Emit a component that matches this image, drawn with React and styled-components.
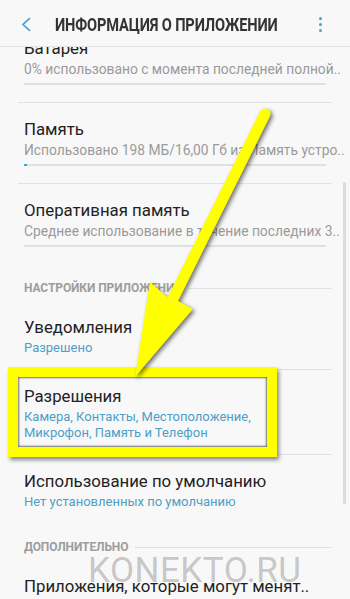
import React from 'react'
import styled, { createGlobalStyle } from 'styled-components'

const GlobalStyle = createGlobalStyle`
  html, body {
    margin: 0;
    padding: 0;
    background: #f8f8f8;
  }
  body {
    font-family: Roboto, "Noto Sans", Arial, sans-serif;
    -webkit-font-smoothing: antialiased;
  }
`

// data for the list
const storageRows = [
  { title: 'Батарея', sub: '0% использовано с момента последней полной..', fill: 0 },
  { title: 'Память', sub: 'Использовано 198 МБ/16,00 Гб из Память устро..', fill: 1 },
  { title: 'Оперативная память', sub: 'Среднее использование в течение последних 3..', fill: 0 },
]

const App = () => {
  return (
    <Screen>
      <GlobalStyle />
      {/* toolbar */}
      <Header>
        <BackButton>
          <svg width="11" height="15" viewBox="0 0 11 15">
            <path d="M9 1.2 L2 7.5 L9 13.8" fill="none" stroke="#4a9fca" strokeWidth="1.6" />
          </svg>
        </BackButton>
        <Title>ИНФОРМАЦИЯ О ПРИЛОЖЕНИИ</Title>
        <MenuButton>
          <Dot />
          <Dot />
          <Dot />
        </MenuButton>
      </Header>

      <Scroll>
        <Content>
          <Group>
            {storageRows.map((r) => (
              <Row key={r.title} $bar>
                <RowTitle>{r.title}</RowTitle>
                <RowSub>{r.sub}</RowSub>
                <Bar>
                  <BarFill $empty={r.fill === 0} style={{ width: `${r.fill}%` }} />
                </Bar>
              </Row>
            ))}
          </Group>

          <SectionHeader>
            <span>Настройки приложения</span>
          </SectionHeader>
          <Group>
            <Row>
              <RowTitle>Уведомления</RowTitle>
              <RowSub $blue>Разрешено</RowSub>
            </Row>
            <Row>
              <RowTitle>Разрешения</RowTitle>
              <RowSub $blue>
                Камера, Контакты, Местоположение,
                <br />
                Микрофон, Память и Телефон
              </RowSub>
              <Frame />
            </Row>
            <Row>
              <RowTitle>Использование по умолчанию</RowTitle>
              <RowSub $blue>Нет установленных по умолчанию</RowSub>
            </Row>
          </Group>

          <SectionHeader>
            <span>Дополнительно</span>
          </SectionHeader>
          <Group>
            <Row>
              <RowTitle>Приложения, которые могут менят..</RowTitle>
              <RowSub $blue>Разрешено</RowSub>
            </Row>
          </Group>
        </Content>
      </Scroll>

      <ScrollThumb />
      <Watermark>KONEKTO.RU</Watermark>

      {/* yellow pointer */}
      <Arrow width="350" height="599" viewBox="0 0 350 599">
        <g fill="#ffff00">
          <line x1="265" y1="114" x2="170" y2="305" stroke="#ffff00" strokeWidth="11" strokeLinecap="round" />
          <polygon points="135,377 150,282 166,296 180,302 193,309" />
        </g>
      </Arrow>
    </Screen>
  )
}

const Screen = styled.div`
  position: relative;
  width: 350px;
  height: 599px;
  overflow: hidden;
  background: #f8f8f8;
`

const Header = styled.header`
  position: relative;
  z-index: 2;
  height: 46px;
  display: flex;
  align-items: center;
  padding: 0 18px 0 18px;
  background: #f8f8f8;
  border-bottom: 1px solid #e4e4e4;
`

const BackButton = styled.div`
  flex-shrink: 0;
  width: 37px;
  display: flex;
  align-items: center;
  padding-left: 3px;
  padding-top: 2px;
  box-sizing: border-box;
`

const Title = styled.h1`
  flex: 1;
  min-width: 0;
  margin: 0;
  font-size: 19px;
  font-weight: 700;
  color: #333;
  letter-spacing: -0.2px;
  white-space: nowrap;
  transform: scaleX(0.77);
  transform-origin: left center;
  padding-top: 2px;
`

const MenuButton = styled.div`
  flex-shrink: 0;
  width: 24px;
  display: flex;
  flex-direction: column;
  align-items: center;
  gap: 3px;
  padding-top: 2px;
`

const Dot = styled.span`
  width: 3px;
  height: 3px;
  border-radius: 50%;
  background: #4a9fca;
`

const Scroll = styled.div`
  height: 552px;
  overflow: hidden;
`

const Content = styled.div`
  margin-top: -25px;
`

const Group = styled.div`
  margin: 0 18px;
`

const Row = styled.div`
  position: relative;
  padding: 15px 6px ${(p) => (p.$bar ? '17px' : '13px')};
  &:not(:last-child) {
    border-bottom: 1px solid #e2e2e2;
  }
`

const RowTitle = styled.div`
  font-size: 16.8px;
  line-height: 22px;
  color: #222;
  white-space: nowrap;
`

const RowSub = styled.div`
  margin-top: 2px;
  font-size: ${(p) => (p.$blue ? '13px' : '13.8px')};
  line-height: 16px;
  color: ${(p) => (p.$blue ? '#4d9fc7' : '#9a9a9a')};
  white-space: nowrap;
`

const Bar = styled.div`
  margin-top: 6px;
  height: 2px;
  background: #e0e0e0;
`

const BarFill = styled.div`
  height: 100%;
  background: #3aa7d8;
  min-width: ${(p) => (p.$empty ? '0' : '3px')};
`

const SectionHeader = styled.div`
  display: flex;
  align-items: center;
  gap: 7px;
  padding: 16px 18px 5px 24px;
  font-size: 12px;
  font-weight: 700;
  line-height: 16px;
  letter-spacing: -0.1px;
  color: #9d9d9d;
  text-transform: uppercase;
  span {
    white-space: nowrap;
  }
  &::after {
    content: '';
    flex: 1;
    height: 1px;
    background: #e2e2e2;
  }
`

const Frame = styled.div`
  position: absolute;
  top: -3px;
  left: -10px;
  width: 269px;
  height: 90px;
  box-sizing: border-box;
  border: 10px solid #ffff00;
  box-shadow: inset 0 0 2px 1px rgba(0, 0, 0, 0.55), 2px 3px 4px rgba(0, 0, 0, 0.45);
  pointer-events: none;
`

const ScrollThumb = styled.div`
  position: absolute;
  top: 182px;
  right: 4px;
  width: 3px;
  height: 322px;
  border-radius: 2px;
  background: #dcdcdc;
`

const Watermark = styled.div`
  position: absolute;
  left: 88px;
  top: 553px;
  font-size: 35px;
  line-height: 35px;
  font-weight: 400;
  letter-spacing: 0.5px;
  color: rgba(120, 120, 120, 0.4);
  pointer-events: none;
`

const Arrow = styled.svg`
  position: absolute;
  top: 0;
  left: 0;
  pointer-events: none;
  filter: drop-shadow(2px 2px 2px rgba(0, 0, 0, 0.55));
`

export default App
